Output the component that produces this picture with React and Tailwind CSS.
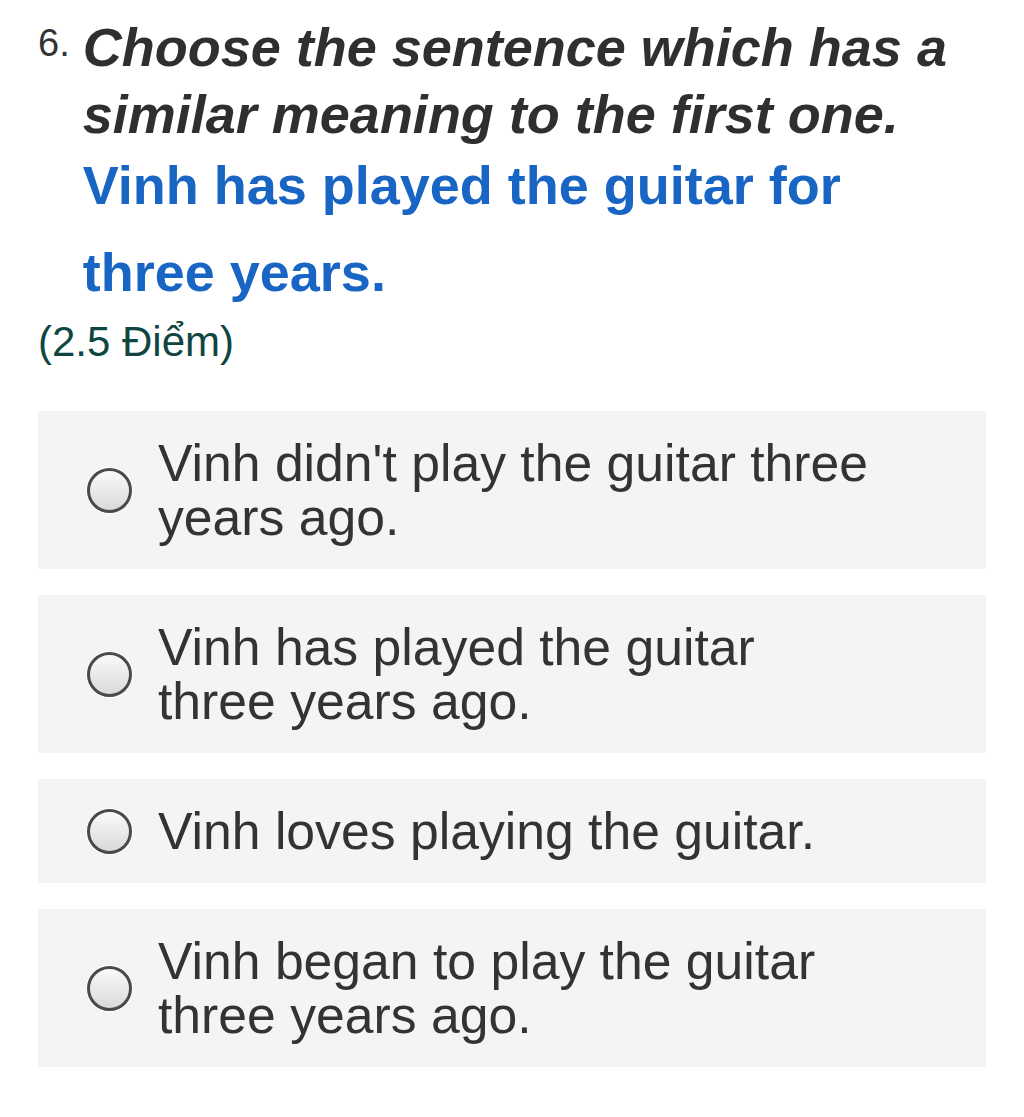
const options = [
  "Vinh didn't play the guitar three years ago.",
  "Vinh has played the guitar three years ago.",
  "Vinh loves playing the guitar.",
  "Vinh began to play the guitar three years ago.",
];

function Radio() {
  return (
    <span className="shrink-0 w-[45px] h-[45px] rounded-full border-[3px] border-[#4a4a4a] bg-gradient-to-b from-[#fafafa] to-[#d9d9d9] shadow-[0_0_0_1px_#ffffff]" />
  );
}

export default function App() {
  return (
    <div
      className="w-[1024px] h-[1117px] bg-white px-[38px] pt-[14px]"
      style={{ fontFamily: '"Liberation Sans", Arial, sans-serif' }}
    >
      <div className="flex items-start">
        <span className="text-[38px] leading-none text-[#333] mt-[10px] mr-[13px]">6.</span>
        <div>
          <div className="text-[54px] leading-[67px] font-bold italic text-[#2f2f2f]">
            Choose the sentence which has a similar meaning to the first one.
          </div>
          <div className="text-[54px] leading-[87px] font-bold text-[#1865c4] mt-[-6px] pr-[100px]">
            Vinh has played the guitar for three years.
          </div>
        </div>
      </div>
      <div className="text-[42px] leading-[44px] text-[#0f4641] mt-[4px]">(2.5 Điểm)</div>

      <div className="mt-[47px] flex flex-col gap-[26px] w-[948px]">
        {options.map((o) => (
          <label key={o} className="flex items-center bg-[#f4f4f4] pl-[49px] py-[25px]">
            <Radio />
            <span className="ml-[26px] w-[720px] text-[51.7px] leading-[54px] text-[#333]">{o}</span>
          </label>
        ))}
      </div>
    </div>
  );
}
